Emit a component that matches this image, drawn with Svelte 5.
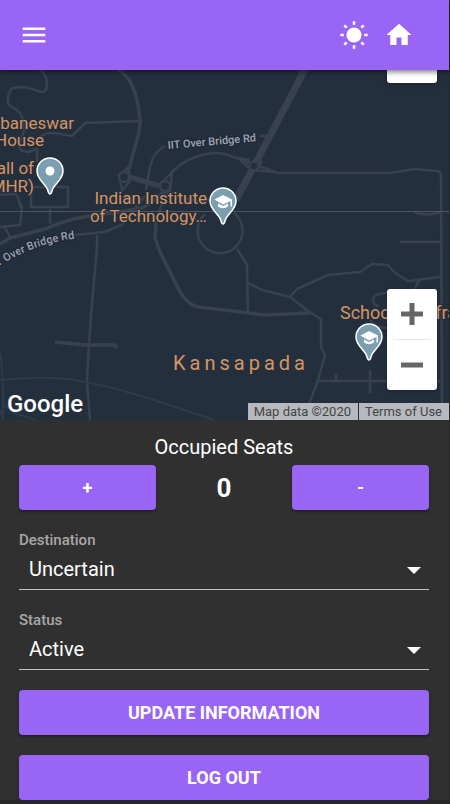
<script>
  let seats = $state(0);
  let destination = $state('Uncertain');
  let status = $state('Active');
</script>

{#snippet pin(x, y, school)}
  <g transform="translate({x} {y})">
    <path class="pin" d="M0 23C-1.5 23-1.7 21-2.3 19C-4 13-13 9-13 0A13 13 0 0 1 13 0C13 9 4 13 2.3 19C1.7 21 1.5 23 0 23Z" />
    {#if school}
      <path fill="#fff" d="M0-6L9-1.500V5.500H7.500V0L0 3.500L-8.500-1.500ZM-5 2.500L0 5L5 2.500V5.500Q0 9-5 5.500Z" />
    {:else}
      <circle r="4.500" fill="#fff" />
    {/if}
  </g>
{/snippet}

<div class="page">
  <header>
    <button class="icon" aria-label="Menu">
      <svg width="30" height="30" viewBox="0 0 24 24"><path d="M3 18h18v-2H3v2zm0-5h18v-2H3v2zm0-7v2h18V6H3z" /></svg>
    </button>
    <div class="actions">
      <button class="icon" aria-label="Toggle light theme">
        <svg width="30" height="30" viewBox="0 0 30 30">
          <circle cx="15" cy="15" r="7.600" />
          <path d="M15 1.300v3.500M15 25.200v3.500M1.300 15h3.500M25.200 15h3.500M5.300 5.300l2.400 2.400M22.300 22.300l2.400 2.400M5.300 24.700l2.400-2.400M22.300 7.700l2.400-2.400" fill="none" stroke="#fff" stroke-width="2.600" />
        </svg>
      </button>
      <a class="icon" href="#home" aria-label="Home">
        <svg width="30" height="30" viewBox="0 0 24 24"><path d="M10 20v-6h4v6h5v-8h3L12 3 2 12h3v8z" /></svg>
      </a>
    </div>
  </header>

  <section class="map" aria-label="Map">
    <svg class="canvas" viewBox="0 0 449 350" preserveAspectRatio="xMidYMid slice">
      <g class="roads">
        <path d="M40 0Q46 4 47 12L46 20Q44 23 38 21L25 17L12 18Q7 25 8 33Q10 37 17 40Q24 45 24 60L19 76Q20 82 28 82L37 79V92" />
        <path d="M38 70Q42 62 55 63L72 66L85 53L139 51" />
        <path class="main" d="M118 0C134 8 138 30 140 50C141 67 132 80 130 97L124 107" />
        <path d="M130 96L119 105L122 121L130 111M129 98V111M146 120L150 97Q153 82 165 76" />
        <path class="wide" d="M129 107L160 116" />
        <path d="M172 102L160 115L170 121L172 102Q183 91 196 87Q214 80 228 85L253 94L278 103H390L415 99L437 101Q441 102 441 106L442 350" />
        <path class="trunk" d="M309 -8L236 130" />
        <path d="M299 0L300 7M260 66H272M238 88L250 90M240 90L252 100L275 102M262 91L257 100" />
        <path d="M31 117H68V137H31ZM50 139V154M0 125L16 124L22 137L20 155L0 157M5 158L10 167M17 125L21 138" />
        <path class="main" d="M0 174L10 168L45 159Q75 146 100 145L142 138Q156 131 164 121L198 132L210 130" />
        <path d="M75 165L104 162L122 155L145 126M97 165V177L91 245L88 290L87 313L90 350" />
        <path class="main" d="M156 153L155 168L160 182L180 222Q188 235 198 237L225 240L265 245L310 243" />
        <path d="M155 155Q163 130 166 120M237 179L247 195L248 243" />
        <path d="M205 144A22.500 22.500 0 1 0 234 143" />
        <path d="M248 213L262 220L290 227L308 241L321 249V277L325 285L317 313L303 350M290 227L297 219L328 205L360 202L372 194L388 195L395 203L408 211L440 207M420 209L413 222L385 223Q373 225 373 229Q373 236 379 236M370 250Q376 258 388 258" />
        <path d="M318 311H441M336 304V312M370 300V323M400 172H441M414 142Q428 147 441 142" />
        <path class="main" d="M55 272L85 275H115L117 278" />
        <path class="minor" d="M0 310Q50 305 80 311Q115 317 160 332L214 350M0 283Q4 305 3 350M0 345L5 335L15 343L35 350" />
      </g>
      <g class="circles">
        <circle cx="124" cy="107" r="5" />
        <circle cx="165" cy="116" r="5" />
        <circle cx="254" cy="96" r="4.500" />
      </g>
      <path d="M0 141.500H449" stroke="#4a5462" />
      <path id="bridge-road" d="M-20 210Q25 173 80 168" fill="none" />
      <g class="street">
        <text x="168" y="79" transform="rotate(-5 168 79)">IIT Over Bridge Rd</text>
        <text><textPath href="#bridge-road" startOffset="16">IIT Over Bridge Rd</textPath></text>
      </g>
      <g class="place">
        <text class="end" x="74" y="59">Bhubaneswar</text>
        <text class="end" x="44" y="76">House</text>
        <text class="end" x="34" y="104">Hall of</text>
        <text class="end" x="34" y="122">(MHR)</text>
        <text class="end" x="207" y="134">Indian Institute</text>
        <text class="end" x="207" y="152">of Technology…</text>
        <text class="school" x="340" y="249">School of Infrastructure</text>
        <text class="town" x="173" y="300">Kansapada</text>
      </g>
      {@render pin(50, 101, false)}
      {@render pin(223, 131, true)}
      {@render pin(369, 267, true)}
    </svg>
    <button class="control fullscreen" aria-label="Toggle fullscreen"></button>
    <div class="control zoom">
      <button aria-label="Zoom in"><svg width="22" height="22" viewBox="0 0 22 22"><path d="M0 11h22M11 0v22" /></svg></button>
      <button aria-label="Zoom out"><svg width="22" height="22" viewBox="0 0 22 22"><path d="M0 11h22" /></svg></button>
    </div>
    <span class="logo">Google</span>
    <div class="credits"><span>Map data ©2020</span><a href="#terms">Terms of Use</a></div>
  </section>

  <main>
    <h1>Occupied Seats</h1>
    <div class="counter">
      <button class="primary" onclick={() => seats++}>+</button>
      <output>{seats}</output>
      <button class="primary" onclick={() => (seats = Math.max(0, seats - 1))}>-</button>
    </div>
    <div class="field">
      <label for="destination">Destination</label>
      <div class="pick">
        <select id="destination" bind:value={destination}><option>Uncertain</option></select>
        <svg width="14" height="7" viewBox="0 0 14 7"><path d="M0 0h14L7 7z" /></svg>
      </div>
    </div>
    <div class="field">
      <label for="status">Status</label>
      <div class="pick">
        <select id="status" bind:value={status}><option>Active</option><option>Inactive</option></select>
        <svg width="14" height="7" viewBox="0 0 14 7"><path d="M0 0h14L7 7z" /></svg>
      </div>
    </div>
    <button class="primary block">UPDATE INFORMATION</button>
    <button class="primary block">LOG OUT</button>
  </main>
</div>

<style>
  :global(body) { background: #272727; }
  .page { margin-right: 1px; font-family: Roboto, sans-serif; color: #fff; }
  button { border: 0; padding: 0; font: inherit; color: inherit; cursor: pointer; }
  header {
    position: relative; z-index: 2; height: 70px; box-sizing: border-box; padding: 0 35px 0 19px;
    display: flex; align-items: center; justify-content: space-between;
    background: #9965f4; box-shadow: 0 2px 5px rgba(0, 0, 0, 0.5);
  }
  .actions { display: flex; gap: 15px; }
  .icon { display: flex; background: none; }
  .icon svg { fill: #fff; }
  .map { position: relative; height: 350px; overflow: hidden; background: #242f3e; }
  .canvas { display: block; width: 100%; height: 100%; }
  .roads path { fill: none; stroke: #38414e; stroke-width: 2.500; stroke-linejoin: round; }
  .roads .main { stroke-width: 3.500; }
  .roads .wide { stroke-width: 5; }
  .roads .trunk { stroke-width: 7; }
  .roads .minor { stroke: #303b49; stroke-width: 2; }
  .circles { fill: #242f3e; stroke: #38414e; stroke-width: 2.500; }
  .street { font-size: 11px; font-weight: 500; fill: #9ca5b3; stroke: #212a37; stroke-width: 3px; paint-order: stroke; }
  .place { font-size: 17px; fill: #d59563; stroke: #242f3e; stroke-width: 2px; paint-order: stroke; }
  .end { text-anchor: end; }
  .school { font-size: 18px; }
  .town { font-size: 20px; letter-spacing: 4px; }
  .pin { fill: #7b9eb0; stroke: #fff; stroke-width: 1.500; }
  .control { position: absolute; right: 12px; width: 50px; background: #fff; border-radius: 3px; box-shadow: 0 1px 4px rgba(0, 0, 0, 0.3); }
  .fullscreen { top: -37px; height: 50px; }
  .zoom { bottom: 30px; }
  .zoom button { display: flex; width: 100%; height: 50px; align-items: center; justify-content: center; background: none; }
  .zoom button + button::before { content: ''; position: absolute; top: 50px; left: 6px; right: 6px; height: 1px; background: #e6e6e6; }
  .zoom button + button { margin-top: 1px; }
  .zoom path { stroke: #666; stroke-width: 5; }
  .logo { position: absolute; left: 7px; bottom: 2px; font: 500 24px/28px Roboto, sans-serif; }
  .credits { position: absolute; right: 0; bottom: 0; display: flex; gap: 1px; font-size: 13px; line-height: 17px; color: #444; }
  .credits > * { padding: 0 7px 0 6px; background: #b6b9bd; color: inherit; text-decoration: none; }
  main { display: flex; flex-direction: column; padding: 15px 20px 0 19px; background: #303030; }
  h1 { margin: 0 0 6px; font-size: 20px; line-height: 24px; font-weight: 400; text-align: center; }
  .counter { display: grid; grid-template-columns: repeat(3, 1fr); align-items: center; }
  output { text-align: center; font-size: 26px; font-weight: 700; }
  .primary { height: 45px; border-radius: 4px; background: #9965f4; font-size: 18px; font-weight: 700; box-shadow: 0 2px 3px rgba(0, 0, 0, 0.3); }
  .block { margin-top: 20px; }
  .field { display: flex; flex-direction: column; padding-top: 20px; }
  label { font-size: 15px; line-height: 20px; font-weight: 500; color: #a8a8a8; }
  .pick { display: grid; align-items: center; border-bottom: 1px solid #c0c0c0; }
  .pick > * { grid-area: 1 / 1; }
  .pick svg { justify-self: end; margin-right: 8px; margin-top: 1px; fill: #fff; pointer-events: none; }
  select { appearance: none; width: 100%; height: 39px; padding: 0 30px 2px 10px; border: 0; background: none; color: #fff; font: 400 20px Roboto, sans-serif; }
  option { background: #303030; }
</style>
